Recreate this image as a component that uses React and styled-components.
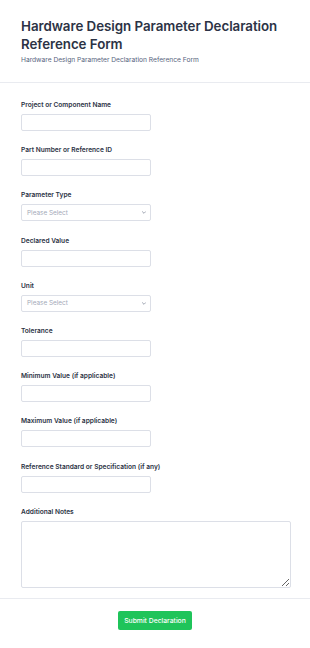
import React from "react";
import styled, { createGlobalStyle } from "styled-components";

const GlobalStyle = createGlobalStyle`
  html, body {
    margin: 0;
    padding: 0;
    background: #ffffff;
    font-family: Inter, "Noto Sans", sans-serif;
  }
`;

const fields = [
  { label: "Project or Component Name", type: "text" },
  { label: "Part Number or Reference ID", type: "text" },
  { label: "Parameter Type", type: "select" },
  { label: "Declared Value", type: "text" },
  { label: "Unit", type: "select" },
  { label: "Tolerance", type: "text" },
  { label: "Minimum Value (if applicable)", type: "text" },
  { label: "Maximum Value (if applicable)", type: "text" },
  { label: "Reference Standard or Specification (if any)", type: "text" },
];

const Page = styled.div`
  width: 310px;
  background: #fff;
`;

const Header = styled.header`
  padding: 17px 21px 18px;
  border-bottom: 1px solid #e9ebf0;
`;

const Title = styled.h1`
  margin: 0;
  font-size: 13.35px;
  line-height: 18px;
  font-weight: 600;
  color: #2c3345;
  letter-spacing: -0.05px;
`;

const Subtitle = styled.p`
  margin: 3px 0 0;
  font-size: 6.65px;
  line-height: 8px;
  color: #57647e;
`;

const Form = styled.form`
  display: flex;
  flex-direction: column;
  gap: 15.2px;
  padding: 18px 21px 10px;
  border-bottom: 1px solid #e9ebf0;
`;

const Field = styled.div`
  display: flex;
  flex-direction: column;
  gap: 5px;
`;

const Label = styled.label`
  font-size: 6.6px;
  line-height: 8px;
  font-weight: 600;
  color: #2c3345;
`;

const Input = styled.input`
  box-sizing: border-box;
  width: 130px;
  height: 17px;
  margin: 0;
  border: 1px solid #dcdfe7;
  border-radius: 2px;
  background: #fff;
  outline: none;
`;

const Select = styled.div`
  box-sizing: border-box;
  width: 130px;
  height: 17px;
  border: 1px solid #dcdfe7;
  border-radius: 2px;
  display: flex;
  align-items: center;
  justify-content: space-between;
  padding: 0 4px 0 5px;
  font-size: 6.4px;
  color: #a3a9b8;
`;

const TextArea = styled.textarea`
  box-sizing: border-box;
  width: 270px;
  height: 67px;
  margin: 0;
  border: 1px solid #dcdfe7;
  border-radius: 2px;
  resize: vertical;
  outline: none;
`;

const Footer = styled.div`
  display: flex;
  justify-content: center;
  padding: 12px 0 20px;
`;

const SubmitButton = styled.button`
  width: 74px;
  height: 19px;
  border: none;
  border-radius: 2px;
  background: #1fc45a;
  color: #fff;
  font-family: Inter, sans-serif;
  font-size: 6.8px;
  font-weight: 500;
  padding: 0;
`;

function Chevron() {
  return (
    <svg width="4" height="3" viewBox="0 0 10 6" fill="none">
      <path d="M1 1l4 4 4-4" stroke="#7b8294" strokeWidth="1.8" strokeLinecap="round" />
    </svg>
  );
}

export default function App() {
  return (
    <Page>
      <GlobalStyle />
      <Header>
        <Title>Hardware Design Parameter Declaration Reference Form</Title>
        <Subtitle>Hardware Design Parameter Declaration Reference Form</Subtitle>
      </Header>
      <Form>
        {fields.map((f) => (
          <Field key={f.label}>
            <Label>{f.label}</Label>
            {f.type === "select" ? (
              <Select>
                <span>Please Select</span>
                <Chevron />
              </Select>
            ) : (
              <Input type="text" />
            )}
          </Field>
        ))}
        <Field>
          <Label>Additional Notes</Label>
          <TextArea />
        </Field>
      </Form>
      <Footer>
        <SubmitButton type="button">Submit Declaration</SubmitButton>
      </Footer>
    </Page>
  );
}
